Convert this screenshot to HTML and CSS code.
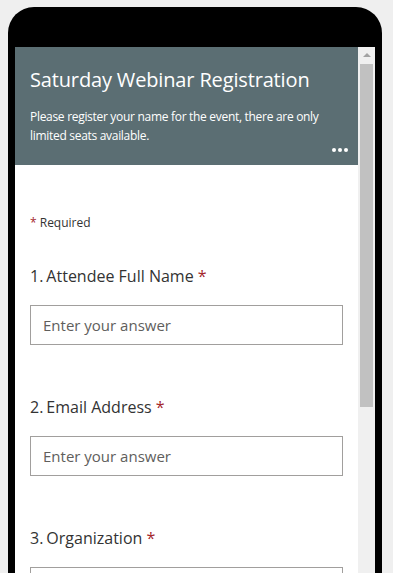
FILE: index.html
```html
<!DOCTYPE html>
<html lang="en">
<head>
  <meta charset="UTF-8">
  <meta name="viewport" content="width=device-width, initial-scale=1">
  <title>Saturday Webinar Registration</title>
  <link rel="stylesheet" href="styles.css">
</head>
<body>
  <!-- Phone frame -->
  <div class="phone">
    <div class="screen">
      <div class="form">
        <!-- Form header -->
        <div class="form-header">
          <h1>Saturday Webinar Registration</h1>
          <p>Please register your name for the event, there are only limited seats available.</p>
          <div class="more-dots"><span></span><span></span><span></span></div>
        </div>

        <!-- Questions -->
        <div class="form-body">
          <div class="required"><span class="star">*</span> Required</div>

          <div class="question">
            <div class="q-title">1.<span class="q-text">Attendee Full Name</span> <span class="star">*</span></div>
            <input class="answer" type="text" placeholder="Enter your answer">
          </div>

          <div class="question">
            <div class="q-title">2.<span class="q-text">Email Address</span> <span class="star">*</span></div>
            <input class="answer" type="text" placeholder="Enter your answer">
          </div>

          <div class="question">
            <div class="q-title">3.<span class="q-text">Organization</span> <span class="star">*</span></div>
            <input class="answer" type="text" placeholder="Enter your answer">
          </div>
        </div>
      </div>

      <!-- Scrollbar -->
      <div class="scrollbar">
        <div class="arrow-up"></div>
        <div class="thumb"></div>
      </div>
    </div>
  </div>
</body>
</html>
```

FILE: styles.css
```css
/* Reset and Base Styles */
* {
  margin: 0;
  padding: 0;
  box-sizing: border-box;
}
html, body {
  height: 100%;
  overflow: hidden;
}
body {
  font-family: 'Open Sans', 'Noto Sans', sans-serif;
  background: #efefef;
  color: #333;
  padding: 7px 11px 0 8px;
}

.phone {
  width: 374px;
  height: 100%;
  background: #000;
  border-radius: 26px 26px 0 0;
  padding: 40px 7px 0 7px;
}
.screen {
  display: flex;
  height: 100%;
  background: #fff;
  overflow: hidden;
}
.form {
  width: 343px;
  flex-shrink: 0;
}

/* Header */
.form-header {
  position: relative;
  height: 118px;
  background: #5b6e73;
  color: #fff;
  padding: 19px 15px 0 15px;
}
.form-header h1 {
  font-size: 20px;
  font-weight: 400;
  line-height: 28px;
  letter-spacing: -0.15px;
}
.form-header p {
  margin-top: 13px;
  font-size: 12px;
  line-height: 19px;
  letter-spacing: -0.3px;
}
.more-dots {
  position: absolute;
  right: 10px;
  bottom: 13px;
  display: flex;
  gap: 2px;
}
.more-dots span {
  width: 4px;
  height: 4px;
  border-radius: 50%;
  background: #fff;
}

/* Body */
.form-body {
  padding: 49px 15px 0 15px;
}
.required {
  font-size: 12px;
  line-height: 18px;
  margin-bottom: 32px;
}
.star {
  color: #a4262c;
}
.question {
  margin-bottom: 50px;
}
.q-title {
  font-size: 16px;
  line-height: 24px;
  margin-bottom: 17px;
}
.q-text {
  margin-left: 3px;
}
.answer {
  display: block;
  width: 313px;
  height: 40px;
  border: 1px solid #a19f9d;
  padding: 0 12px;
  font-family: inherit;
  font-size: 15px;
  color: #333;
  background: #fff;
  outline: none;
}
.answer::placeholder {
  color: #605e5c;
}

/* Scrollbar */
.scrollbar {
  width: 17px;
  background: #f0f0f0;
  display: flex;
  flex-direction: column;
  align-items: center;
}
.arrow-up {
  margin-top: 6px;
  width: 0;
  height: 0;
  border-left: 4px solid transparent;
  border-right: 4px solid transparent;
  border-bottom: 4px solid #a3a3a3;
}
.thumb {
  margin-top: 7px;
  width: 13px;
  height: 343px;
  background: #c1c1c1;
}
```
